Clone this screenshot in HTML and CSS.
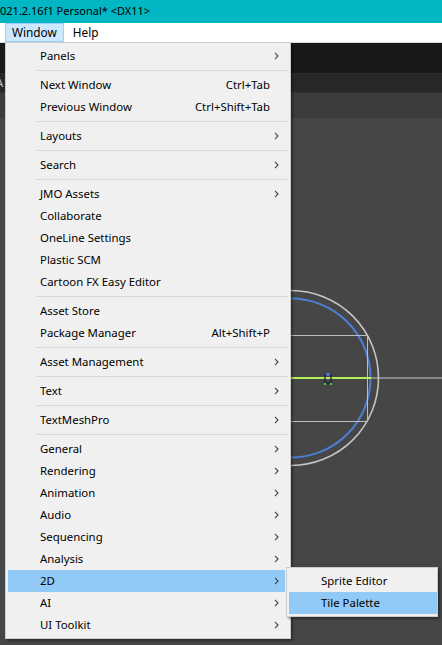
FILE: index.html
```html
<!DOCTYPE html>
<html>
<head>
<meta charset="utf-8">
<link rel="stylesheet" href="styles.css">
</head>
<body>
<div class="app">
  <div class="titlebar"><span class="title">021.2.16f1 Personal* &lt;DX11&gt;</span></div>
  <div class="menubar">
    <span class="mb-item active">Window</span>
    <span class="mb-item">Help</span>
  </div>
  <div class="bar1"></div>
  <div class="bar2"><span class="cut">A</span></div>
  <div class="bar3"></div>
  <div class="scene">
    <svg class="scene-svg" width="442" height="527" viewBox="0 0 442 527">
      <circle cx="291" cy="260" r="87.5" fill="none" stroke="#c4c4c4" stroke-width="1.6"/>
      <circle cx="291" cy="260" r="79.5" fill="none" stroke="#4d7fd6" stroke-width="2"/>
      <polyline points="200,217.5 367.5,217.5 367.5,303.5 200,303.5" fill="none" stroke="#bdbdbd" stroke-width="1"/>
      <line x1="371" y1="260" x2="442" y2="260" stroke="#c8c8c8" stroke-width="1"/>
      <line x1="200" y1="260" x2="371" y2="260" stroke="#b4f05a" stroke-width="2"/>
      <g>
        <rect x="325" y="257" width="6" height="8" fill="none" stroke="#1d1d3a" stroke-width="1.2"/>
        <rect x="326" y="255" width="4" height="3" fill="#5566cc"/>
        <rect x="324" y="265" width="2" height="2" fill="#3bd43b"/>
        <rect x="330" y="265" width="2" height="2" fill="#3bd43b"/>
      </g>
    </svg>
  </div>

  <div class="menu">
    <div class="item"><span class="label">Panels</span><span class="key"></span><span class="arrow"><svg width="5" height="8" viewBox="0 0 5 8"><path d="M1 0.8 L4 4 L1 7.2" fill="none" stroke="#444" stroke-width="1.1"/></svg></span></div>
    <div class="sep"></div>
    <div class="item"><span class="label">Next Window</span><span class="key">Ctrl+Tab</span><span class="arrow"></span></div>
    <div class="item"><span class="label">Previous Window</span><span class="key">Ctrl+Shift+Tab</span><span class="arrow"></span></div>
    <div class="sep"></div>
    <div class="item"><span class="label">Layouts</span><span class="key"></span><span class="arrow"><svg width="5" height="8" viewBox="0 0 5 8"><path d="M1 0.8 L4 4 L1 7.2" fill="none" stroke="#444" stroke-width="1.1"/></svg></span></div>
    <div class="sep"></div>
    <div class="item"><span class="label">Search</span><span class="key"></span><span class="arrow"><svg width="5" height="8" viewBox="0 0 5 8"><path d="M1 0.8 L4 4 L1 7.2" fill="none" stroke="#444" stroke-width="1.1"/></svg></span></div>
    <div class="sep"></div>
    <div class="item"><span class="label">JMO Assets</span><span class="key"></span><span class="arrow"><svg width="5" height="8" viewBox="0 0 5 8"><path d="M1 0.8 L4 4 L1 7.2" fill="none" stroke="#444" stroke-width="1.1"/></svg></span></div>
    <div class="item"><span class="label">Collaborate</span><span class="key"></span><span class="arrow"></span></div>
    <div class="item"><span class="label">OneLine Settings</span><span class="key"></span><span class="arrow"></span></div>
    <div class="item"><span class="label">Plastic SCM</span><span class="key"></span><span class="arrow"></span></div>
    <div class="item"><span class="label">Cartoon FX Easy Editor</span><span class="key"></span><span class="arrow"></span></div>
    <div class="sep"></div>
    <div class="item"><span class="label">Asset Store</span><span class="key"></span><span class="arrow"></span></div>
    <div class="item"><span class="label">Package Manager</span><span class="key">Alt+Shift+P</span><span class="arrow"></span></div>
    <div class="sep"></div>
    <div class="item"><span class="label">Asset Management</span><span class="key"></span><span class="arrow"><svg width="5" height="8" viewBox="0 0 5 8"><path d="M1 0.8 L4 4 L1 7.2" fill="none" stroke="#444" stroke-width="1.1"/></svg></span></div>
    <div class="sep"></div>
    <div class="item"><span class="label">Text</span><span class="key"></span><span class="arrow"><svg width="5" height="8" viewBox="0 0 5 8"><path d="M1 0.8 L4 4 L1 7.2" fill="none" stroke="#444" stroke-width="1.1"/></svg></span></div>
    <div class="sep"></div>
    <div class="item"><span class="label">TextMeshPro</span><span class="key"></span><span class="arrow"><svg width="5" height="8" viewBox="0 0 5 8"><path d="M1 0.8 L4 4 L1 7.2" fill="none" stroke="#444" stroke-width="1.1"/></svg></span></div>
    <div class="sep"></div>
    <div class="item"><span class="label">General</span><span class="key"></span><span class="arrow"><svg width="5" height="8" viewBox="0 0 5 8"><path d="M1 0.8 L4 4 L1 7.2" fill="none" stroke="#444" stroke-width="1.1"/></svg></span></div>
    <div class="item"><span class="label">Rendering</span><span class="key"></span><span class="arrow"><svg width="5" height="8" viewBox="0 0 5 8"><path d="M1 0.8 L4 4 L1 7.2" fill="none" stroke="#444" stroke-width="1.1"/></svg></span></div>
    <div class="item"><span class="label">Animation</span><span class="key"></span><span class="arrow"><svg width="5" height="8" viewBox="0 0 5 8"><path d="M1 0.8 L4 4 L1 7.2" fill="none" stroke="#444" stroke-width="1.1"/></svg></span></div>
    <div class="item"><span class="label">Audio</span><span class="key"></span><span class="arrow"><svg width="5" height="8" viewBox="0 0 5 8"><path d="M1 0.8 L4 4 L1 7.2" fill="none" stroke="#444" stroke-width="1.1"/></svg></span></div>
    <div class="item"><span class="label">Sequencing</span><span class="key"></span><span class="arrow"><svg width="5" height="8" viewBox="0 0 5 8"><path d="M1 0.8 L4 4 L1 7.2" fill="none" stroke="#444" stroke-width="1.1"/></svg></span></div>
    <div class="item"><span class="label">Analysis</span><span class="key"></span><span class="arrow"><svg width="5" height="8" viewBox="0 0 5 8"><path d="M1 0.8 L4 4 L1 7.2" fill="none" stroke="#444" stroke-width="1.1"/></svg></span></div>
    <div class="item hl"><span class="label">2D</span><span class="key"></span><span class="arrow"><svg width="5" height="8" viewBox="0 0 5 8"><path d="M1 0.8 L4 4 L1 7.2" fill="none" stroke="#444" stroke-width="1.1"/></svg></span></div>
    <div class="item"><span class="label">AI</span><span class="key"></span><span class="arrow"><svg width="5" height="8" viewBox="0 0 5 8"><path d="M1 0.8 L4 4 L1 7.2" fill="none" stroke="#444" stroke-width="1.1"/></svg></span></div>
    <div class="item"><span class="label">UI Toolkit</span><span class="key"></span><span class="arrow"><svg width="5" height="8" viewBox="0 0 5 8"><path d="M1 0.8 L4 4 L1 7.2" fill="none" stroke="#444" stroke-width="1.1"/></svg></span></div>
  </div>

  <div class="submenu">
    <div class="sitem"><span class="label">Sprite Editor</span></div>
    <div class="sitem hl"><span class="label">Tile Palette</span></div>
  </div>
</div>
</body>
</html>
```

FILE: styles.css
```css
* { box-sizing: border-box; }
html, body { margin: 0; padding: 0; }
body {
  width: 442px;
  height: 645px;
  overflow: hidden;
  background: #464646;
  font-family: "Noto Sans", "Open Sans", sans-serif;
  font-size: 11.4px;
  color: #000;
}
.app {
  position: relative;
  width: 442px;
  height: 645px;
  display: flex;
  flex-direction: column;
}
.titlebar {
  height: 23px;
  background: #00b7c3;
  display: flex;
  align-items: center;
  padding-left: 0;
  padding-bottom: 1px;
}
.title { font-size: 11px; line-height: 16px; white-space: nowrap; }
.menubar {
  height: 20px;
  background: #fff;
  border-bottom: 1px solid #dadada;
  display: flex;
  align-items: flex-start;
  padding-left: 5px;
  gap: 2px;
  font-size: 11.8px;
}
.mb-item {
  height: 19px;
  line-height: 17px;
  padding: 0 6px;
  border: 1px solid transparent;
}
.mb-item.active {
  background: #cce8ff;
  border-color: #99d1ff;
}
.bar1 { height: 30px; background: #191919; }
.bar2 {
  height: 19px;
  background: #282828;
  border-top: 1px solid #2e2e2e;
  color: #c8c8c8;
  line-height: 18px;
  overflow: hidden;
}
.cut { display: inline-block; margin-left: -4px; }
.bar3 { height: 26px; background: #3c3c3c; border-top: 1px solid #333; }
.scene { flex: 1; background: #464646; overflow: hidden; }
.scene-svg { display: block; }

.menu {
  position: absolute;
  left: 5px;
  top: 42px;
  width: 286px;
  background: #f0f0f0;
  border: 1px solid #cccccc;
  padding: 2px 1px 2px 2px;
  box-shadow: 2px 2px 2px rgba(0, 0, 0, 0.35);
}
.item {
  height: 22px;
  margin-right: 4px;
  display: grid;
  grid-template-columns: 1fr auto 15px;
  align-items: center;
  padding-left: 32px;
  white-space: nowrap;
}
.label, .key { line-height: 16px; }
.key { text-align: right; }
.arrow { display: flex; align-items: center; padding-left: 4px; height: 22px; }
.arrow svg { display: block; }
.item.hl { background: #91c9f7; }
.sep {
  height: 7px;
  margin: 0 1px 0 28px;
  padding-top: 3px;
}
.sep::after {
  content: "";
  display: block;
  height: 1px;
  background: #d7d7d7;
}
.submenu {
  position: absolute;
  left: 286px;
  top: 567px;
  width: 152px;
  background: #f0f0f0;
  border: 1px solid #cccccc;
  padding: 2px 0 2px 1px;
  box-shadow: 2px 2px 2px rgba(0, 0, 0, 0.35);
}
.sitem {
  height: 22px;
  display: flex;
  align-items: center;
  padding-left: 32px;
  margin-left: 1px;
  white-space: nowrap;
}
.sitem.hl { background: #91c9f7; }
```
